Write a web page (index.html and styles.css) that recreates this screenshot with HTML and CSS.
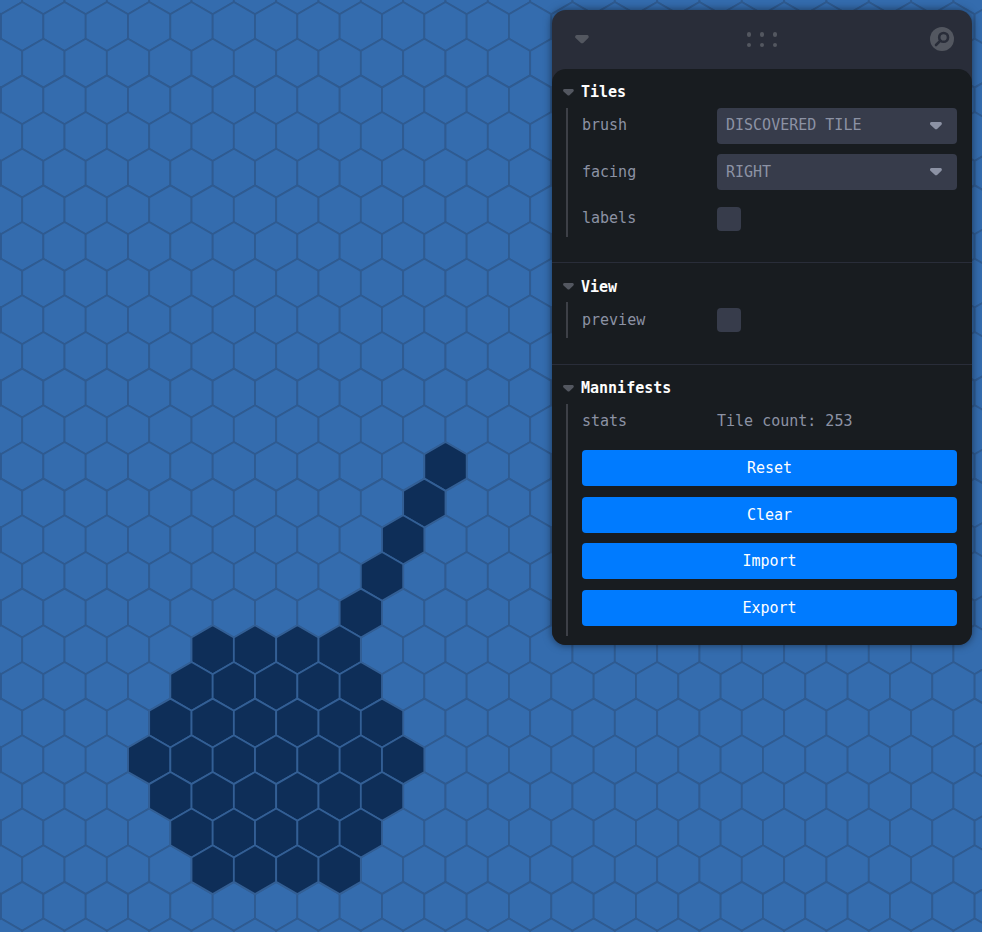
FILE: index.html
```html
<!DOCTYPE html>
<html lang="en">

<head>
    <meta charset="UTF-8">
    <meta name="viewport" content="width=device-width, initial-scale=1.0">
    <title>Hex Map Editor</title>
    <link rel="stylesheet" href="styles.css">
</head>

<body>
    <svg id="map" class="map" width="982" height="932" xmlns="http://www.w3.org/2000/svg"></svg>

    <div class="panel">
        <div class="panel-title">
            <svg class="chevron chevron-title" viewBox="0 0 9 5"><path d="M3.8 4.4c.4.3 1 .3 1.4 0L8 1.7A1 1 0 007.4 0H1.6a1 1 0 00-.7 1.7l3 2.7z"/></svg>
            <div class="grip">
                <i></i><i></i><i></i><i></i><i></i><i></i>
            </div>
            <svg class="search" viewBox="0 0 24 24">
                <circle class="search-bg" cx="12" cy="12" r="12"/>
                <circle class="search-line" cx="13.6" cy="10.4" r="4.4"/>
                <line class="search-line" x1="10.4" y1="13.6" x2="6" y2="18"/>
            </svg>
        </div>

        <div class="panel-body">
            <section class="folder">
                <h3 class="folder-title">
                    <svg class="chevron" viewBox="0 0 9 5"><path d="M3.8 4.4c.4.3 1 .3 1.4 0L8 1.7A1 1 0 007.4 0H1.6a1 1 0 00-.7 1.7l3 2.7z"/></svg>
                    Tiles
                </h3>
                <div class="folder-content">
                    <div class="row">
                        <label>brush</label>
                        <div class="select">
                            <select>
                                <option>DISCOVERED TILE</option>
                                <option>HIDDEN TILE</option>
                            </select>
                            <svg class="chevron chevron-select" viewBox="0 0 9 5"><path d="M3.8 4.4c.4.3 1 .3 1.4 0L8 1.7A1 1 0 007.4 0H1.6a1 1 0 00-.7 1.7l3 2.7z"/></svg>
                        </div>
                    </div>
                    <div class="row">
                        <label>facing</label>
                        <div class="select">
                            <select>
                                <option>RIGHT</option>
                                <option>LEFT</option>
                            </select>
                            <svg class="chevron chevron-select" viewBox="0 0 9 5"><path d="M3.8 4.4c.4.3 1 .3 1.4 0L8 1.7A1 1 0 007.4 0H1.6a1 1 0 00-.7 1.7l3 2.7z"/></svg>
                        </div>
                    </div>
                    <div class="row">
                        <label>labels</label>
                        <input type="checkbox" class="check">
                    </div>
                </div>
            </section>

            <section class="folder">
                <h3 class="folder-title">
                    <svg class="chevron" viewBox="0 0 9 5"><path d="M3.8 4.4c.4.3 1 .3 1.4 0L8 1.7A1 1 0 007.4 0H1.6a1 1 0 00-.7 1.7l3 2.7z"/></svg>
                    View
                </h3>
                <div class="folder-content">
                    <div class="row">
                        <label>preview</label>
                        <input type="checkbox" class="check">
                    </div>
                </div>
            </section>

            <section class="folder folder-last">
                <h3 class="folder-title">
                    <svg class="chevron" viewBox="0 0 9 5"><path d="M3.8 4.4c.4.3 1 .3 1.4 0L8 1.7A1 1 0 007.4 0H1.6a1 1 0 00-.7 1.7l3 2.7z"/></svg>
                    Mannifests
                </h3>
                <div class="folder-content">
                    <div class="row">
                        <label>stats</label>
                        <span class="stat-value">Tile count: 253</span>
                    </div>
                    <button class="action">Reset</button>
                    <button class="action">Clear</button>
                    <button class="action">Import</button>
                    <button class="action">Export</button>
                </div>
            </section>
        </div>
    </div>

    <script src="map.js"></script>
</body>
</html>
```

FILE: styles.css
```css
* {
    box-sizing: border-box;
}

body {
    margin: 0;
    width: 982px;
    height: 932px;
    overflow: hidden;
    background-color: #346cae;
    font-family: "DejaVu Sans Mono", monospace;
    font-size: 15px;
}

.map {
    position: absolute;
    top: 0;
    left: 0;
}

.hex {
    fill: #346cae;
    stroke: #2f5b91;
    stroke-width: 1.8;
}

.hex-on {
    fill: #0e2e58;
    stroke: #335f95;
}

/* floating panel */
.panel {
    position: absolute;
    top: 10px;
    left: 552px;
    width: 420px;
    background-color: #292d39;
    border-radius: 14px;
    box-shadow: 0 0 9px rgba(0, 0, 0, 0.53);
}

.panel-title {
    height: 59px;
    padding: 0 18px 1px;
    display: grid;
    grid-template-columns: 1fr auto 1fr;
    align-items: center;
}

.grip {
    margin-top: 1px;
    display: grid;
    grid-template-columns: repeat(3, 4.5px);
    gap: 6px 8.5px;
}

.grip i {
    width: 4.5px;
    height: 4.5px;
    border-radius: 50%;
    background-color: #535760;
}

.chevron {
    display: block;
    width: 13px;
    height: 7px;
    fill: #535760;
}

.chevron-title {
    margin-left: 4px;
    width: 16px;
    height: 9px;
}

.chevron-select {
    position: absolute;
    top: 14px;
    right: 14px;
    width: 14px;
    height: 8px;
    margin: 0;
    fill: #8c92a4;
    pointer-events: none;
}

.search {
    justify-self: end;
    width: 24px;
    height: 24px;
}

.search-bg {
    fill: #535760;
}

.search-line {
    fill: none;
    stroke: #292d39;
    stroke-width: 2.6;
    stroke-linecap: round;
}

.panel-body {
    background-color: #181c20;
    border-radius: 14px;
}

.folder {
    padding: 10px 15px 25.5px 10px;
    border-bottom: 1px solid #292d39;
}

.folder-last {
    padding-bottom: 9px;
    border-bottom: none;
}

.folder-title {
    margin: 0;
    height: 24px;
    padding-top: 2.6px;
    display: flex;
    align-items: center;
    gap: 6px;
    color: #fefefe;
    font-size: 15px;
    font-weight: bold;
}

.folder-content {
    margin-top: 5px;
    margin-left: 4px;
    padding-left: 14px;
    border-left: 2px solid #3d4047;
    display: flex;
    flex-direction: column;
    gap: 10.4px;
}

.folder-last .folder-content {
    padding-bottom: 10px;
    gap: 10.5px;
}

.row {
    height: 36px;
    display: flex;
    align-items: center;
}

.row label {
    width: 135px;
    padding-bottom: 1.2px;
    color: #8c92a4;
}

.select {
    position: relative;
    flex: 1;
    height: 36px;
}

.select select {
    appearance: none;
    width: 100%;
    height: 100%;
    padding: 0 9px 1.2px;
    border: none;
    border-radius: 4px;
    background-color: #373c4b;
    color: #8c92a4;
    font: inherit;
}

.check {
    appearance: none;
    margin: 0;
    width: 24px;
    height: 24px;
    border-radius: 4px;
    background-color: #373c4b;
}

.stat-value {
    padding-bottom: 1.2px;
    color: #8c92a4;
}

.action {
    height: 36px;
    padding: 0 0 0.5px;
    border: none;
    border-radius: 4px;
    background-color: #007bff;
    color: #fefefe;
    font: inherit;
    cursor: pointer;
}
```

FILE: map.js
```js
// hex grid, pointy top
const R = 24.44;
const STEP_X = 42.33;
const STEP_Y = 36.66;
const START_X = 22.2;
const START_Y = 26.5;

// discovered tiles: row -> [first column, last column]
const discovered = {
    12: [10, 10],
    13: [9, 9],
    14: [9, 9],
    15: [8, 8],
    16: [8, 8],
    17: [4, 7],
    18: [4, 8],
    19: [3, 8],
    20: [3, 9],
    21: [3, 8],
    22: [4, 8],
    23: [4, 7],
};

function hexPoints(cx, cy) {
    const pts = [];
    for (let i = 0; i < 6; i++) {
        const a = Math.PI / 6 + i * Math.PI / 3;
        pts.push((cx + R * Math.cos(a)).toFixed(2) + "," + (cy + R * Math.sin(a)).toFixed(2));
    }
    return pts.join(" ");
}

const map = document.getElementById("map");
const later = [];

for (let row = -1; row <= 25; row++) {
    for (let col = -1; col <= 23; col++) {
        const cx = START_X + col * STEP_X + (row % 2 !== 0 ? STEP_X / 2 : 0);
        const cy = START_Y + row * STEP_Y;
        const hex = document.createElementNS("http://www.w3.org/2000/svg", "polygon");
        hex.setAttribute("points", hexPoints(cx, cy));
        const range = discovered[row];
        if (range && col >= range[0] && col <= range[1]) {
            hex.setAttribute("class", "hex hex-on");
            later.push(hex);
        } else {
            hex.setAttribute("class", "hex");
            map.appendChild(hex);
        }
    }
}

later.forEach(hex => map.appendChild(hex));
```
